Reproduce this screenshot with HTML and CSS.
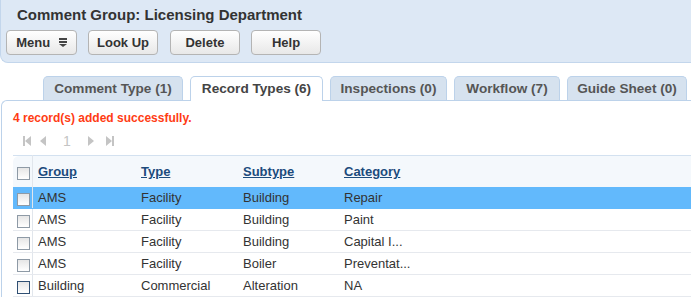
FILE: index.html
```html
<!DOCTYPE html>
<html>
<head>
<meta charset="UTF-8">
<title>Comment Group</title>
<link rel="stylesheet" href="styles.css">
</head>
<body>
<div class="header">
  <h1>Comment Group: Licensing Department</h1>
  <div class="buttons">
    <button class="btn menu">Menu <svg class="caret" width="8" height="9" viewBox="0 0 8 9"><rect x="0" y="0" width="8" height="2"/><rect x="0" y="3" width="8" height="2"/><path d="M0 6 L8 6 L4 9 Z"/></svg></button>
    <button class="btn lookup">Look Up</button>
    <button class="btn delete">Delete</button>
    <button class="btn help">Help</button>
  </div>
</div>

<ul class="tabs">
  <li class="tab t1">Comment Type (1)</li>
  <li class="tab t2 active">Record Types (6)</li>
  <li class="tab t3">Inspections (0)</li>
  <li class="tab t4">Workflow (7)</li>
  <li class="tab t5">Guide Sheet (0)</li>
</ul>

<div class="content">
  <p class="msg">4 record(s) added successfully.</p>
  <div class="pager">
    <svg width="8" height="10" viewBox="0 0 8 10"><rect x="0" y="0" width="2" height="10"/><path d="M8 0 L2 5 L8 10 Z"/></svg>
    <svg class="prev" width="7" height="10" viewBox="0 0 7 10"><path d="M7 0 L1 5 L7 10 Z"/></svg>
    <span class="page">1</span>
    <svg class="next" width="7" height="10" viewBox="0 0 7 10"><path d="M0 0 L6 5 L0 10 Z"/></svg>
    <svg class="last" width="8" height="10" viewBox="0 0 8 10"><path d="M0 0 L6 5 L0 10 Z"/><rect x="6" y="0" width="2" height="10"/></svg>
  </div>

  <table class="grid">
    <thead>
      <tr>
        <th class="chk"><span class="box"></span></th>
        <th class="c-group"><a href="#">Group</a></th>
        <th class="c-type"><a href="#">Type</a></th>
        <th class="c-sub"><a href="#">Subtype</a></th>
        <th class="c-cat"><a href="#">Category</a></th>
      </tr>
    </thead>
    <tbody>
      <tr class="sel">
        <td class="chk"><span class="box"></span></td>
        <td>AMS</td><td>Facility</td><td>Building</td><td>Repair</td>
      </tr>
      <tr>
        <td class="chk"><span class="box"></span></td>
        <td>AMS</td><td>Facility</td><td>Building</td><td>Paint</td>
      </tr>
      <tr>
        <td class="chk"><span class="box"></span></td>
        <td>AMS</td><td>Facility</td><td>Building</td><td>Capital I...</td>
      </tr>
      <tr>
        <td class="chk"><span class="box"></span></td>
        <td>AMS</td><td>Facility</td><td>Boiler</td><td>Preventat...</td>
      </tr>
      <tr>
        <td class="chk"><span class="box dark"></span></td>
        <td>Building</td><td>Commercial</td><td>Alteration</td><td>NA</td>
      </tr>
    </tbody>
  </table>
</div>
</body>
</html>
```

FILE: styles.css
```css
body {margin:0; font-family:"Liberation Sans", Arial, sans-serif; color:#333; background:#fff; width:691px; overflow:hidden;}

.header {background:#dde8f5; border-left:1px solid #c3d6ec; border-bottom:1px solid #c3d6ec; border-bottom-left-radius:8px; height:63px; box-sizing:border-box; padding:6px 0 0 5px;}
.header h1 {margin:0 0 0 11px; font-size:15px; line-height:18px; color:#333; font-weight:bold;}
.buttons {display:flex; margin-top:6px;}
.btn {height:25px; box-sizing:border-box; font-family:"Liberation Sans", Arial, sans-serif; font-size:13px; font-weight:bold; color:#333; background:linear-gradient(#ffffff, #e8e8e8); border:1px solid #b4b4b4; border-radius:4px; padding:0; margin-right:11px;}
.menu {width:71px; margin-left:0;}
.lookup {width:70px;}
.delete {width:70px; margin-left:1px;}
.help {width:70px;}
.caret {margin-left:5px; fill:#444; vertical-align:0;}

.tabs {list-style:none; margin:13px 0 0 43px; padding:0; display:flex; gap:7px; height:24px; position:relative; z-index:1;}
.tab {height:24px; box-sizing:border-box; background:#d6e2ef; border:1px solid #bcd2ea; border-bottom:none; border-radius:5px 5px 0 0; font-size:13.6px; font-weight:bold; color:#555; text-align:center; line-height:23px;}
.tab.active {background:#fff; color:#444; height:25px;}
.t1 {width:140px;}
.t2 {width:133px;}
.t3 {width:117px;}
.t4 {width:106px;}
.t5 {width:120px;}

.content {border-top:1px solid #bcd2ea; border-left:1px solid #bcd2ea; border-top-left-radius:6px; margin-left:1px; padding:10px 0 0 11px;}
.msg {margin:0; color:#ff3c14; font-size:12px; font-weight:bold; line-height:14px;}
.pager {display:flex; align-items:center; height:16px; margin-top:8px; padding-left:10px; fill:#c4c4c4; color:#c4c4c4; font-size:14px;}
.pager .prev {margin-left:8px;}
.pager .page {margin-left:17px;}
.pager .next {margin-left:17px;}
.pager .last {margin-left:11px;}

.grid {border-collapse:collapse; margin-top:6px; width:679px; font-size:13px;}
.grid th {background:#f4f8fc; border-top:1px solid #d3e1f0; height:31px; text-align:left; padding:0 0 0 5px; font-weight:bold;}
.grid th.chk {border-top-left-radius:6px;}
.grid th a {color:#1c4b7c; text-decoration:underline;}
.grid td {height:21px; border-bottom:1px solid #e6e9ee; padding:0 0 0 5px; color:#333; line-height:15px;}
.grid td.chk, .grid th.chk {width:15px; padding:0 0 0 4px; border-right:1px solid #e1e6ec;}
.grid .c-group {width:98px;}
.grid .c-type {width:97px;}
.grid .c-sub {width:96px;}
.grid tr.sel td {background:#62b9fc; border-bottom-color:#62b9fc;}
.box {display:inline-block; width:11px; height:11px; border:1px solid #8e9aa6; background:linear-gradient(#e6e6e6, #fff); vertical-align:middle; position:relative; top:1px;}
.box.dark {border-color:#2f4f73;}
```
